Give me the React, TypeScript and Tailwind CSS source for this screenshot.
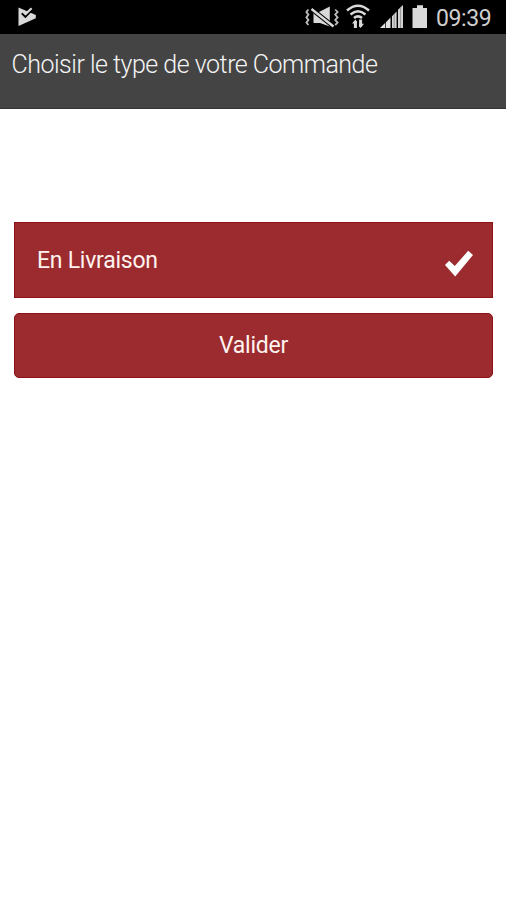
import { useState } from "react";

function PlayCheckIcon() {
  return (
    <svg width="20" height="20" viewBox="0 0 20 20">
      <path d="M0.5 0.5 L17.8 8 V11.2 L0.5 19 Z" fill="#d9d9d9" />
      <path d="M3.8 6.2 L7.4 9.8 L14.6 2.4" fill="none" stroke="#000" strokeWidth="2" />
      <path d="M5 4.4 L7.6 7 L13.6 1.2" fill="none" stroke="#d9d9d9" strokeWidth="2.2" />
    </svg>
  );
}

function MuteVibrateIcon() {
  return (
    <svg width="34" height="22" viewBox="0 0 34 22" fill="none">
      <path d="M8.5 6 H14 L24.8 0.5 V20.5 L15 17 H8.5 Z" fill="#d9d9d9" />
      <path d="M6.5 3 L28.5 20.5" stroke="#000" strokeWidth="4.6" />
      <path d="M6.5 3 L28.5 20.5" stroke="#d9d9d9" strokeWidth="2.4" />
      <path
        d="M3.4 3.5 L1.4 6 L3.4 8.6 L1.4 11.4 L3.4 14 L1.4 16.6 L3.4 19 M30.2 3.5 L32.6 6 L30.2 8.6 L32.6 11.4 L30.2 14 L32.6 16.6 L30.2 19"
        stroke="#bdbdbd"
        strokeWidth="1.8"
      />
    </svg>
  );
}

function WifiIcon() {
  return (
    <svg width="24" height="26" viewBox="0 0 24 26" fill="none" stroke="#d9d9d9">
      <path d="M1 6.5 Q12 -3 23 6.5" strokeWidth="2.6" />
      <path d="M4.5 10.5 Q12 4 19.5 10.5" strokeWidth="2.5" />
      <path d="M8 14 Q12 10.6 16 14" strokeWidth="2.6" />
      <path d="M9.4 17 V24 M14.6 15.5 V22.5" strokeWidth="3" />
      <path d="M6 19.6 L9.4 15.6 L10.9 17.5 V19.6 Z M13.1 19.8 H18 L14.6 24 L13.1 22.4 Z" fill="#d9d9d9" stroke="none" />
    </svg>
  );
}

function SignalIcon() {
  return (
    <svg width="24" height="24" viewBox="0 0 24 24">
      <path d="M0 23 L5.3 17.8 V23 Z M6 17.3 L10.5 12.6 V23 H6 Z" fill="#e0e0e0" />
      <path d="M12 11.2 L16.6 6.4 V23 H12 Z M18 4.8 L23 0 V23 H18 Z" fill="#d4d4d4" />
      <path d="M14.2 9 V23 M20.6 2.4 V23" stroke="#858585" strokeWidth="0.8" />
    </svg>
  );
}

function BatteryIcon() {
  return (
    <svg width="16" height="24" viewBox="0 0 16 24">
      <path d="M5 0.3 H11 V3 H15 V23 H0.5 V3 H5 Z" fill="#d9d9d9" />
    </svg>
  );
}

function StatusBar() {
  return (
    <div className="flex h-[34px] items-start bg-black text-[#cfcfcf]">
      <div className="pl-[18px] pt-[7px]">
        <PlayCheckIcon />
      </div>
      <div className="ml-auto flex items-start pr-[14px]">
        <div className="mr-[7px] pt-[6px]">
          <MuteVibrateIcon />
        </div>
        <div className="mr-[10px] pt-[4px]">
          <WifiIcon />
        </div>
        <div className="mr-[8px] pt-[5px]">
          <SignalIcon />
        </div>
        <div className="mr-[8px] pt-[5px]">
          <BatteryIcon />
        </div>
        <span className="w-[56px] whitespace-nowrap pt-[6px] text-[23px] leading-[26px] tracking-[-0.4px]">
          09:39
        </span>
      </div>
    </div>
  );
}

export default function App() {
  const [selected, setSelected] = useState(true);

  return (
    <div className="min-h-[900px] bg-white font-[Roboto,sans-serif]">
      <StatusBar />
      <header className="h-[75px] border-b border-[#333] bg-[#444] pl-[11.5px] pt-[15px]">
        <h1 className="whitespace-nowrap text-[25px] font-light leading-8 tracking-[-0.5px] text-[#f4f4f4]">
          Choisir le type de votre Commande
        </h1>
      </header>
      <main className="flex flex-col gap-[15px] pl-[14px] pr-[13px] pt-[113px]">
        <button
          type="button"
          onClick={() => setSelected(!selected)}
          className="flex h-[76px] items-center justify-between border border-[#8c1218] bg-[#9b2b2f] pl-[22px] pr-[18px] text-[23px] text-[#fff3ef]"
        >
          <span className="pt-[2px] leading-8 tracking-[-0.25px]">En Livraison</span>
          {selected && (
            <svg width="30" height="28" viewBox="0 0 30 28" className="mt-[8px]">
              <path d="M1 15 L5.2 10.8 L10.8 16 L24.2 0.8 L29 5 L11.2 26.5 Z" fill="#fff" />
            </svg>
          )}
        </button>
        <button
          type="button"
          className="h-[65px] rounded-[5px] border border-[#8c1218] bg-[#9b2b2f] text-center text-[23px] leading-8 tracking-[-0.25px] text-[#fff3ef]"
        >
          Valider
        </button>
      </main>
    </div>
  );
}
